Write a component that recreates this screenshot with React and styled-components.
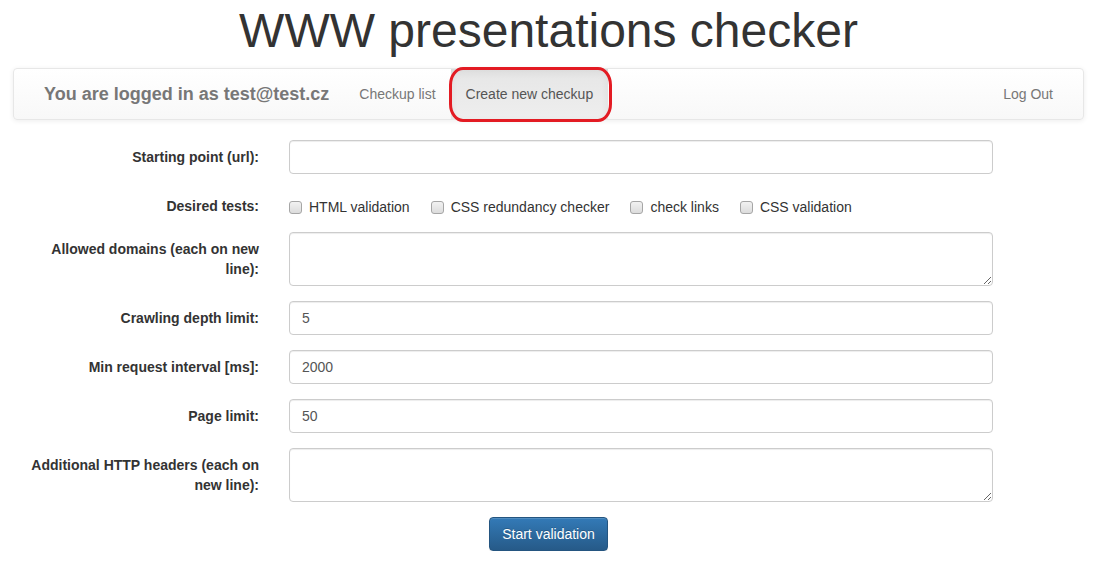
import React from 'react'
import styled, { createGlobalStyle } from 'styled-components'

const GlobalStyle = createGlobalStyle`
  * { box-sizing: border-box; }
  body {
    margin: 0;
    background: #fff;
    color: #333;
    font-family: "Liberation Sans", Arial, Helvetica, sans-serif;
    font-size: 14px;
    line-height: 1.42857;
  }
`

const Page = styled.div`
  padding: 0 13px;
`

const Title = styled.h1`
  margin: 4px 0 11px;
  font-size: 48px;
  line-height: 53px;
  font-weight: 400;
  text-align: center;
  color: #333;
`

const Navbar = styled.nav`
  display: flex;
  align-items: stretch;
  height: 52px;
  padding: 0 15px;
  margin-bottom: 20px;
  border: 1px solid #e7e7e7;
  border-radius: 4px;
  background-image: linear-gradient(to bottom, #fff 0, #f8f8f8 100%);
  box-shadow: inset 0 1px 0 rgba(255, 255, 255, 0.15), 0 1px 5px rgba(0, 0, 0, 0.075);
`

const Brand = styled.span`
  padding: 15px;
  font-size: 18px;
  line-height: 20px;
  font-weight: 700;
  color: #777;
`

const NavList = styled.ul`
  display: flex;
  margin: 0;
  padding: 0;
  list-style: none;
  margin-left: ${p => (p.$right ? 'auto' : '0')};
`

const NavItem = styled.li`
  position: relative;
  display: flex;
`

const NavLink = styled.a`
  display: block;
  padding: 15px;
  line-height: 20px;
  text-decoration: none;
  color: ${p => (p.$active ? '#555' : '#777')};
  background-image: ${p =>
    p.$active ? 'linear-gradient(to bottom, #e6e6e6 0, #eeeeee 100%)' : 'none'};
  box-shadow: ${p => (p.$active ? 'inset 0 3px 9px rgba(0, 0, 0, 0.06)' : 'none')};
`

const Highlight = styled.span`
  position: absolute;
  left: -2px;
  right: -4px;
  top: -2px;
  bottom: -3px;
  border: 3px solid #e31b23;
  border-radius: 14px / 18px;
  pointer-events: none;
`

const FormGroup = styled.div`
  display: grid;
  grid-template-columns: 238px 704px;
  column-gap: 30px;
  padding-left: 8px;
  margin-bottom: 15px;
`

const Label = styled.label`
  padding-top: 7px;
  text-align: right;
  font-weight: 700;
  line-height: 20px;
  color: #333;
`

const Input = styled.input`
  display: block;
  width: 100%;
  height: 34px;
  padding: 6px 12px;
  font: inherit;
  font-size: 14px;
  line-height: 20px;
  color: #555;
  background: #fff;
  border: 1px solid #ccc;
  border-radius: 4px;
  box-shadow: inset 0 1px 1px rgba(0, 0, 0, 0.075);
  outline: none;
`

const TextArea = styled(Input).attrs({ as: 'textarea' })`
  height: 54px;
  resize: vertical;
`

const Checks = styled.div`
  display: flex;
  gap: 21px;
  padding-top: 7px;
  min-height: 28px;
`

const CheckLabel = styled.label`
  display: flex;
  align-items: center;
  gap: 7px;
  line-height: 20px;
  color: #333;
`

const Box = styled.input.attrs({ type: 'checkbox' })`
  appearance: none;
  width: 13px;
  height: 13px;
  margin: 1px 0 0;
  border: 1px solid #a6a6a6;
  border-radius: 3px;
  background: linear-gradient(to bottom, #f2f2f2 0, #dcdcdc 100%);
`

const Actions = styled.div`
  display: flex;
  justify-content: center;
`

const Button = styled.button`
  height: 34px;
  padding: 6px 12px;
  font: inherit;
  font-size: 14px;
  line-height: 20px;
  color: #fff;
  text-shadow: 0 -1px 0 rgba(0, 0, 0, 0.2);
  border: 1px solid #245580;
  border-radius: 4px;
  background-image: linear-gradient(to bottom, #337ab7 0, #265a88 100%);
  box-shadow: inset 0 1px 0 rgba(255, 255, 255, 0.15), 0 1px 1px rgba(0, 0, 0, 0.075);
`

const TESTS = ['HTML validation', 'CSS redundancy checker', 'check links', 'CSS validation']

const FIELDS = [
  { label: 'Crawling depth limit:', value: '5' },
  { label: 'Min request interval [ms]:', value: '2000' },
  { label: 'Page limit:', value: '50' }
]

export default function App() {
  return (
    <Page>
      <GlobalStyle />
      <Title>WWW presentations checker</Title>

      <Navbar>
        <Brand>You are logged in as test@test.cz</Brand>
        <NavList>
          <NavItem>
            <NavLink href='#'>Checkup list</NavLink>
          </NavItem>
          <NavItem>
            <NavLink href='#' $active>Create new checkup</NavLink>
            <Highlight />
          </NavItem>
        </NavList>
        <NavList $right>
          <NavItem>
            <NavLink href='#'>Log Out</NavLink>
          </NavItem>
        </NavList>
      </Navbar>

      <form onSubmit={e => e.preventDefault()}>
        <FormGroup>
          <Label>Starting point (url):</Label>
          <Input type='text' />
        </FormGroup>

        <FormGroup>
          <Label>Desired tests:</Label>
          <Checks>
            {TESTS.map(test => (
              <CheckLabel key={test}>
                <Box />
                {test}
              </CheckLabel>
            ))}
          </Checks>
        </FormGroup>

        <FormGroup>
          <Label>Allowed domains (each on new line):</Label>
          <TextArea rows={2} />
        </FormGroup>

        {FIELDS.map(({ label, value }) => (
          <FormGroup key={label}>
            <Label>{label}</Label>
            <Input type='text' defaultValue={value} />
          </FormGroup>
        ))}

        <FormGroup>
          <Label>Additional HTTP headers (each on new line):</Label>
          <TextArea rows={2} />
        </FormGroup>

        <Actions>
          <Button type='submit'>Start validation</Button>
        </Actions>
      </form>
    </Page>
  )
}
